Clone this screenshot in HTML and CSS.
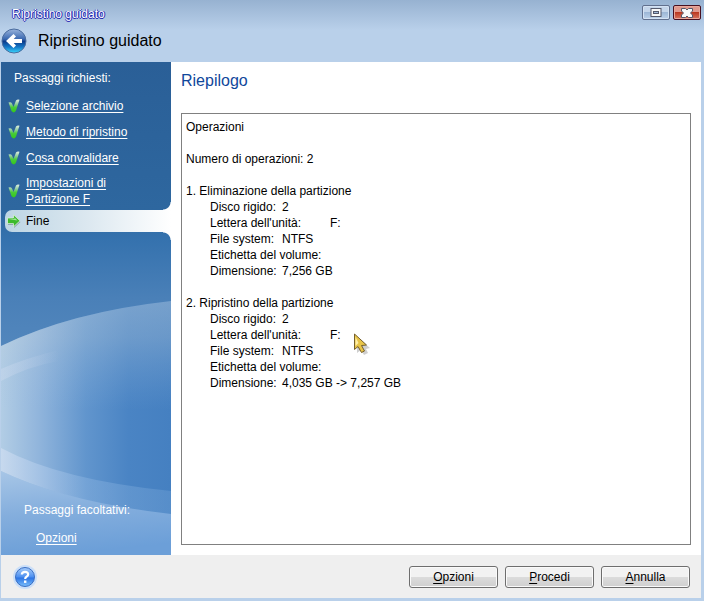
FILE: index.html
```html
<!DOCTYPE html>
<html lang="it">
<head>
  <meta charset="UTF-8">
  <meta name="viewport" content="width=device-width, initial-scale=1.0">
  <title>Ripristino guidato</title>
  <link rel="stylesheet" href="styles.css">
</head>
<body>
  <div class="window">
    <header class="header">
      <div class="titlebar">
        <span class="title">Ripristino guidato</span>
        <div class="window-buttons">
          <button type="button" class="win-btn" aria-label="Ingrandisci">
            <svg width="12" height="9" viewBox="0 0 12 9">
              <rect x="1" y="0.500" width="10" height="8" fill="#f8f8f8" stroke="#54596b"/>
              <rect x="3.500" y="3.500" width="5" height="2" fill="#9fb8d8" stroke="#54596b"/>
            </svg>
          </button>
          <button type="button" class="win-btn close" aria-label="Chiudi">
            <svg width="12" height="10" viewBox="0 0 12 10">
              <path d="M.5.500h4L6 2 7.500.500h4V3L9.500 5l2 2v2.500h-4L6 8 4.500 9.500h-4V7l2-2-2-2z" fill="#f8f8f8" stroke="#54596b"/>
            </svg>
          </button>
        </div>
      </div>
      <div class="nav">
        <button type="button" class="icon-btn" aria-label="Indietro">
          <svg width="26" height="26" viewBox="0 0 26 26">
            <defs>
              <linearGradient id="backFill" x1="0" y1="0" x2="0" y2="1">
                <stop offset="0" stop-color="#9ab4dc"/>
                <stop offset="0.42" stop-color="#3a68b0"/>
                <stop offset="0.52" stop-color="#0c3c8c"/>
                <stop offset="0.75" stop-color="#1478c8"/>
                <stop offset="1" stop-color="#3cd8fc"/>
              </linearGradient>
            </defs>
            <circle cx="13" cy="13" r="12" fill="url(#backFill)" stroke="#4a6c9e"/>
            <path d="M5 13L12.500 6l2.500 2.500-2.300 2.500H21v4h-8.300L15 17.500 12.500 20z" fill="#fff"/>
          </svg>
        </button>
        <h1>Ripristino guidato</h1>
      </div>
    </header>

    <div class="content">
      <aside class="sidebar">
        <svg class="waves" viewBox="0 0 170 493" preserveAspectRatio="none" aria-hidden="true">
          <defs>
            <linearGradient id="sky" x1="0" y1="0" x2="0" y2="1">
              <stop offset="0" stop-color="#2a5f97"/>
              <stop offset="0.3" stop-color="#2e679f"/>
              <stop offset="0.36" stop-color="#3572ae"/>
              <stop offset="0.48" stop-color="#4a80b8"/>
              <stop offset="0.6" stop-color="#5488be"/>
            </linearGradient>
            <linearGradient id="sea" x1="0" y1="0" x2="1" y2="0">
              <stop offset="0" stop-color="#b2cde5"/>
              <stop offset="0.22" stop-color="#91b5dc"/>
              <stop offset="0.5" stop-color="#6195cd"/>
              <stop offset="0.75" stop-color="#4a84c4"/>
              <stop offset="1" stop-color="#4580c1"/>
            </linearGradient>
            <linearGradient id="mist" x1="0" y1="0" x2="0" y2="1">
              <stop offset="0" stop-color="#c0d0dc" stop-opacity="0.4"/>
              <stop offset="0.2" stop-color="#c0d0dc" stop-opacity="0.3"/>
              <stop offset="0.6" stop-color="#a0c0e0" stop-opacity="0"/>
            </linearGradient>
            <linearGradient id="streak" x1="0" y1="0" x2="1" y2="0">
              <stop offset="0" stop-color="#d0dcf0" stop-opacity="0.4"/>
              <stop offset="1" stop-color="#d0dcf0" stop-opacity="0"/>
            </linearGradient>
            <linearGradient id="foam" x1="0" y1="0" x2="1" y2="0">
              <stop offset="0" stop-color="#d0def2" stop-opacity="0.7"/>
              <stop offset="0.5" stop-color="#90b8e4" stop-opacity="0.4"/>
              <stop offset="1" stop-color="#80aede" stop-opacity="0.3"/>
            </linearGradient>
            <linearGradient id="shore" x1="0.1" y1="0" x2="0.3" y2="1">
              <stop offset="0" stop-color="#a6c5e6"/>
              <stop offset="0.5" stop-color="#84aedd"/>
              <stop offset="1" stop-color="#6c9fd8"/>
            </linearGradient>
          </defs>
          <rect width="170" height="493" fill="url(#sky)"/>
          <path d="M0 284Q70 250 170 239V493H0z" fill="url(#sea)"/>
          <path d="M0 284Q70 250 170 239V420H0z" fill="url(#mist)"/>
          <path d="M0 307Q25 296 58 288V299Q28 304 0 319z" fill="url(#streak)"/>
          <path d="M0 386Q60 418 170 429V455Q65 440 0 409z" fill="url(#foam)"/>
          <path d="M0 409Q65 440 170 452V493H0z" fill="url(#shore)"/>
        </svg>
        <svg width="0" height="0" class="symbols" aria-hidden="true">
          <defs>
            <linearGradient id="checkFill" x1="0" y1="0" x2="0" y2="1">
              <stop offset="0" stop-color="#e0f0e4"/>
              <stop offset="0.35" stop-color="#90cc9c"/>
              <stop offset="0.6" stop-color="#48cc38"/>
              <stop offset="1" stop-color="#34c81c"/>
            </linearGradient>
            <symbol id="check" viewBox="0 0 12 14">
              <path d="M.5 3.500Q3 2.500 4 4.500L5.500 8 8 1.500Q9.500 0 11.500.8L8 11.500Q6 15 3.500 12z" fill="url(#checkFill)"/>
            </symbol>
          </defs>
        </svg>

        <h2>Passaggi richiesti:</h2>
        <ul class="steps">
          <li><svg class="check"><use href="#check"/></svg><a href="#">Selezione archivio</a></li>
          <li><svg class="check"><use href="#check"/></svg><a href="#">Metodo di ripristino</a></li>
          <li><svg class="check"><use href="#check"/></svg><a href="#">Cosa convalidare</a></li>
          <li class="tall"><svg class="check"><use href="#check"/></svg><a href="#">Impostazioni di<br>Partizione F</a></li>
          <li class="current" aria-current="step">
            <svg class="arrow" viewBox="0 0 14 14">
              <path d="M1 5.500h6V2.200L13.500 8 7 14V11H1z" fill="#6d8289" opacity="0.6"/>
              <path d="M.5 4h6V.8l6.500 6-6.500 6V9.600h-6z" fill="#3cba2c" stroke="#d8f0d8" stroke-width="0.8"/>
              <path d="M1.500 5h6V3.500L10.500 6.500z" fill="#a4e498"/>
            </svg>
            <span>Fine</span>
          </li>
        </ul>

        <div class="optional">
          <h2>Passaggi facoltativi:</h2>
          <a href="#">Opzioni</a>
        </div>
      </aside>

      <main class="main">
        <h2>Riepilogo</h2>
        <!-- the labels are lined up with tabs, see tab-size -->
        <pre class="summary">
Operazioni

Numero di operazioni: 2

1. Eliminazione della partizione
	Disco rigido:	2
	Lettera dell'unità:		F:
	File system:	NTFS
	Etichetta del volume:
	Dimensione:	7,256 GB

2. Ripristino della partizione
	Disco rigido:	2
	Lettera dell'unità:		F:
	File system:	NTFS
	Etichetta del volume:
	Dimensione:	4,035 GB -&gt; 7,257 GB</pre>
      </main>
    </div>

    <footer class="footer">
      <button type="button" class="icon-btn" aria-label="Guida">
        <svg width="24" height="24" viewBox="0 0 24 24">
          <defs>
            <linearGradient id="helpFill" x1="0" y1="0" x2="0" y2="1">
              <stop offset="0" stop-color="#a8cdfa"/>
              <stop offset="0.5" stop-color="#4c8ff0"/>
              <stop offset="0.55" stop-color="#2c74e4"/>
              <stop offset="1" stop-color="#7cc0fc"/>
            </linearGradient>
          </defs>
          <circle cx="12" cy="12" r="12" fill="#cbdff8"/>
          <circle cx="12" cy="12" r="9.500" fill="url(#helpFill)" stroke="#3a6fc4"/>
          <path d="M8.800 9.500Q9 6.800 12 6.800T15.200 9.300Q15.200 10.800 13.500 11.700Q12.200 12.400 12.200 14" fill="none" stroke="#fff" stroke-width="2.200"/>
          <rect x="11" y="15.500" width="2.400" height="2.400" fill="#fff"/>
        </svg>
      </button>
      <div class="actions">
        <button type="button" class="btn" accesskey="o"><u>O</u>pzioni</button>
        <button type="button" class="btn" accesskey="p"><u>P</u>rocedi</button>
        <button type="button" class="btn" accesskey="a"><u>A</u>nnulla</button>
      </div>
    </footer>
  </div>

  <!-- mouse pointer -->
  <svg class="pointer" width="18" height="24" viewBox="0 0 18 24" aria-hidden="true">
    <path d="M4 4v16l4-3 3 5 4-2-2-4 4-1z" fill="#888" opacity="0.4"/>
    <path d="M1.500 1v15.500L5 13.500l3.500 6 3-1.500L8.500 12.500l5-.5z" fill="#e8c448" stroke="#75602c"/>
    <path d="M2.500 4v9l3-3z" fill="#fff0a8"/>
  </svg>
</body>
</html>
```
FILE: styles.css
```css
* {
  box-sizing: border-box;
}

body {
  margin: 0;
  background: #b9d0ea;
  color: #000;
  font-family: "Liberation Sans", Arial, sans-serif;
  font-size: 12px;
  line-height: 16px;
}

h1, h2, ul, pre {
  margin: 0;
  padding: 0;
  font-weight: normal;
}

button {
  font: inherit;
  color: inherit;
  padding: 0;
  cursor: pointer;
}

.window {
  display: flex;
  flex-direction: column;
  min-height: 100vh;
  padding: 0 3px 3px 1px;
  background: linear-gradient(#97b2d1, #b9d0ea 30px);
}

/* Header */
.titlebar {
  display: flex;
  justify-content: space-between;
  height: 28px;
  padding: 5px 0 0 11px;
}

.title {
  padding-top: 1px;
  color: #fff;
  text-shadow: 1px 0 #1c22b0, 0 1px #1c22b0, -1px 0 #3c48c0;
}

.window-buttons {
  display: flex;
  gap: 3px;
}

.win-btn {
  display: flex;
  align-items: center;
  justify-content: center;
  width: 28px;
  height: 15px;
  border: 1px solid #61708e;
  border-radius: 2px;
  background: linear-gradient(#c4d5ea 50%, #9db7d6 50%, #bdd2ea);
  box-shadow: inset 0 0 0 1px #d4e2f3;
}

.win-btn.close {
  border-color: #481020;
  background: linear-gradient(#e0998e 50%, #bb3921 50%, #d87560);
  box-shadow: inset 0 0 0 1px #e8a89c;
}

.nav {
  display: flex;
  align-items: center;
  gap: 11px;
  height: 34px;
  padding-bottom: 8px;
}

.nav h1,
.main h2 {
  font-size: 16px;
  line-height: 24px;
}

.icon-btn {
  display: flex;
  border: none;
  background: none;
}

/* Content */
.content {
  display: flex;
  flex: 1;
  background: #fff;
}

.sidebar {
  position: relative;
  z-index: 0;
  display: flex;
  flex-direction: column;
  width: 170px;
  flex-shrink: 0;
  padding: 8px 0 9px;
  color: #fff;
}

.waves {
  position: absolute;
  inset: 0;
  z-index: -1;
  width: 100%;
  height: 100%;
}

.symbols {
  position: absolute;
}

.sidebar h2 {
  padding-left: 13px;
  font-size: 12px;
}

.sidebar a {
  color: #fff;
  text-underline-offset: 2px;
}

.steps {
  padding-top: 7px;
  list-style: none;
}

.steps li {
  display: flex;
  align-items: center;
  gap: 6px;
  min-height: 26px;
  padding-left: 7px;
}

.steps .tall {
  min-height: 39px;
}

.check {
  width: 12px;
  height: 14px;
}

.arrow {
  width: 14px;
  height: 14px;
}

.steps .current {
  position: relative;
  gap: 5px;
  min-height: 22px;
  margin-left: 4px;
  padding-left: 2px;
  border-radius: 7px 0 0 7px;
  background: linear-gradient(90deg, #bdd5e4, #dce8f0 50%, #fff);
  color: #000;
}

/* rounded corners where the current step meets the page */
.current::before,
.current::after {
  content: "";
  position: absolute;
  right: 0;
  width: 8px;
  height: 8px;
}

.current::before {
  bottom: 100%;
  background: radial-gradient(circle at 0 0, transparent 7px, #fff 8px);
}

.current::after {
  top: 100%;
  background: radial-gradient(circle at 0 100%, transparent 7px, #fff 8px);
}

.optional {
  margin-top: auto;
  padding-left: 10px;
}

.optional a {
  display: inline-block;
  margin: 12px 0 0 25px;
}

.main {
  display: flex;
  flex: 1;
  flex-direction: column;
  gap: 20px;
  min-width: 0;
  padding: 7px 10px 10px;
}

.main h2 {
  color: #10479b;
}

.summary {
  flex: 1;
  padding: 5px 4px;
  border: 1px solid #808080;
  font-family: inherit;
  tab-size: 24px;
  white-space: pre-wrap;
}

/* Footer */
.footer {
  display: flex;
  align-items: center;
  justify-content: space-between;
  height: 43px;
  padding: 0 11px 0 12px;
  background: #efefef;
}

.actions {
  display: flex;
  gap: 7px;
}

.btn {
  width: 89px;
  height: 22px;
  border: 1px solid #6e6e6e;
  border-radius: 3px;
  background: linear-gradient(#f2f2f2 50%, #dcdcdc 50%, #cfcfcf);
  box-shadow: inset 0 0 0 1px #fafafa;
}

.btn u {
  text-underline-offset: 2px;
}

.pointer {
  position: absolute;
  left: 353px;
  top: 333px;
}
```
